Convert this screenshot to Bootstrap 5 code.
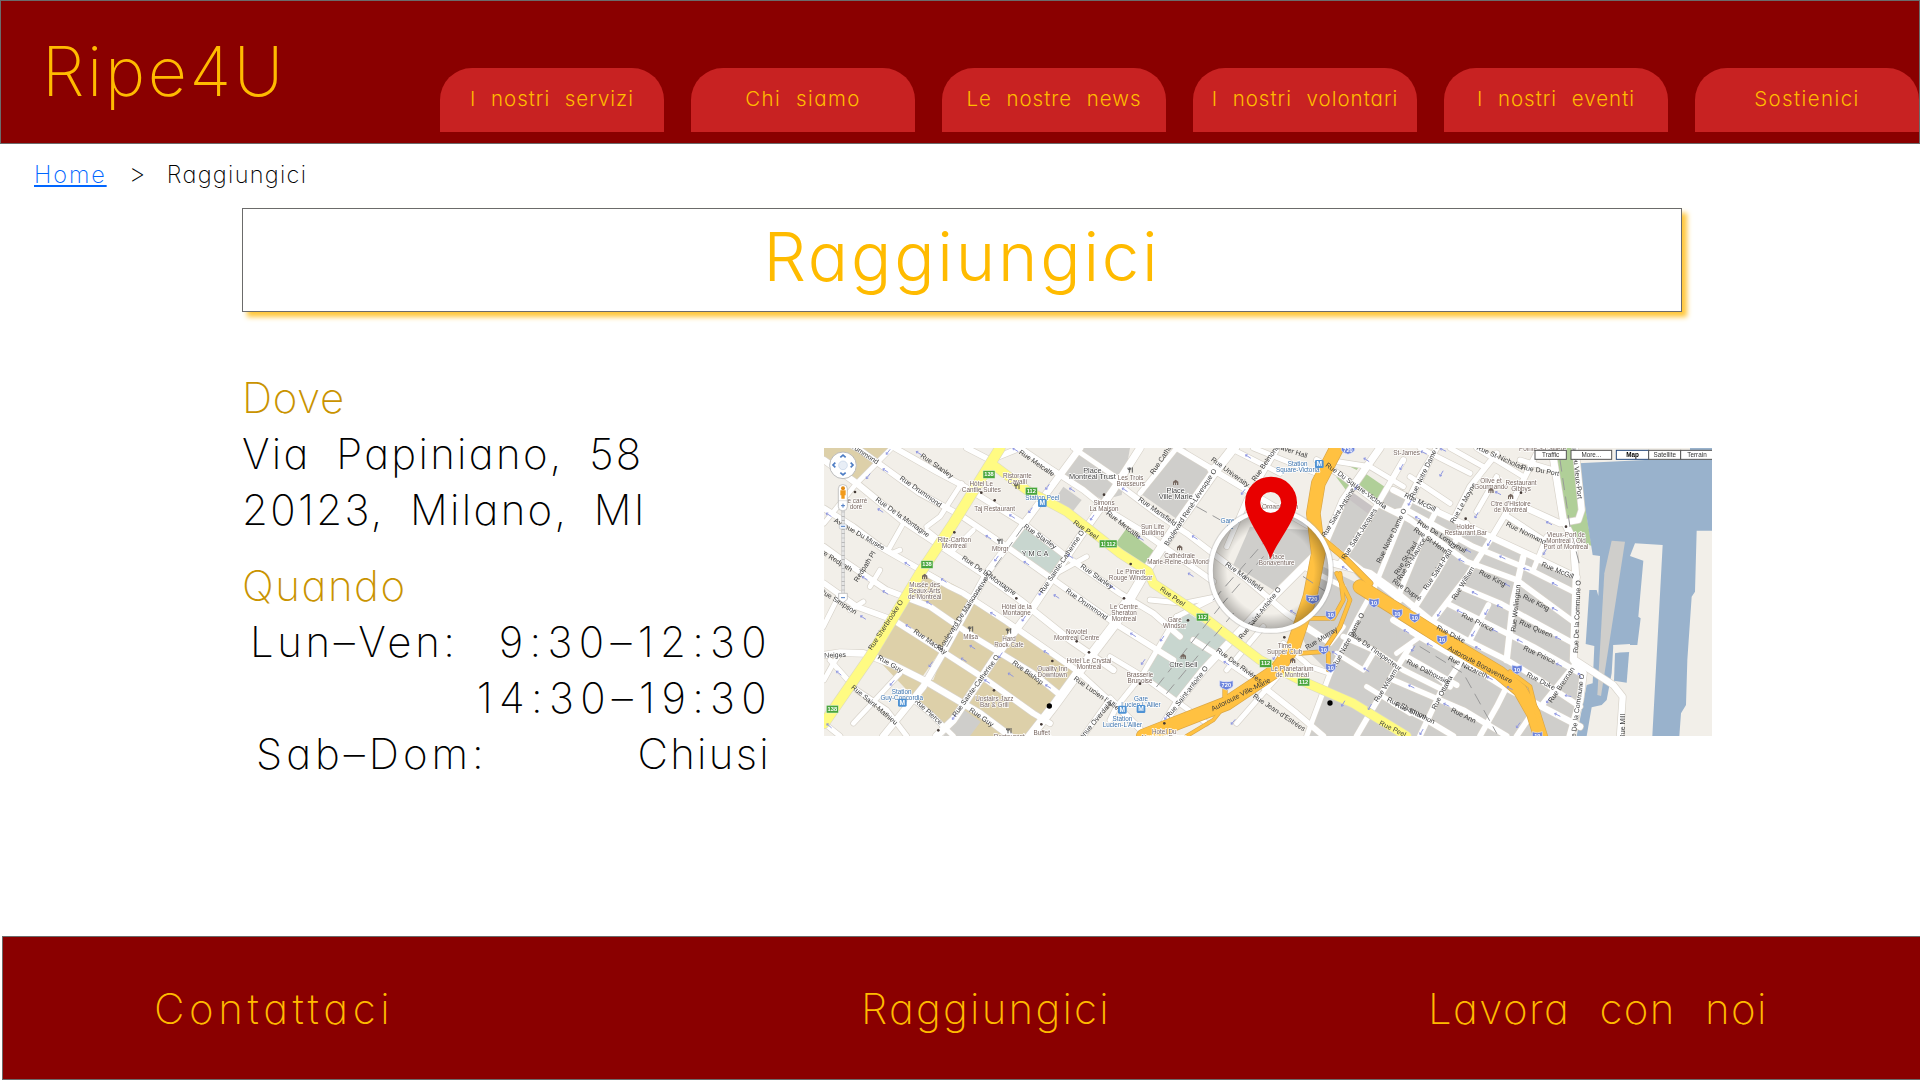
<!DOCTYPE html>
<html lang="it">
<head>
<meta charset="utf-8">
<meta name="viewport" content="width=device-width, initial-scale=1">
<title>Ripe4U - Raggiungici</title>
<link href="https://cdn.jsdelivr.net/npm/bootstrap@5.3.0/dist/css/bootstrap.min.css" rel="stylesheet">
<style>
body{font-family:Inter,Lato,"Liberation Sans",sans-serif;font-weight:200;font-feature-settings:"cv11";color:#000;background:#fff;height:1080px;overflow:hidden}
.site-head{height:144px;background:#8a0000;border:1px solid #6b6b6b;padding:0 0 11px 41px}
.brand-name{font-size:68px;line-height:80px;color:#ffbb00;text-decoration:none;margin-bottom:21px;white-space:nowrap;letter-spacing:2.6px}
.tabs-row{gap:27px}
.tab-link{width:224px;height:64px;padding-bottom:2px;background:#c82222;border-radius:32px 32px 0 0;color:#ffbb00;font-size:20.5px;font-weight:300;text-decoration:none;white-space:nowrap;letter-spacing:1px;word-spacing:.38em}
.tab-link:hover{color:#fff}
.tab-wide{letter-spacing:1.4px}
.crumbs{height:64px;padding:15px 0 0 34px;font-size:23.5px;line-height:32px;letter-spacing:1.3px}
.crumbs a{color:#06f;letter-spacing:1.9px;margin-right:22px}
.crumbs .crumb-sep{margin-right:20px;font-size:26px;line-height:30px}
.title-box{width:1440px;height:104px;padding-bottom:7px;margin-left:242px;border:1px solid #6b6b6b;box-shadow:5px 5px 5px #ffc83c;color:#fb0;font-size:67px;line-height:1;letter-spacing:2.8px}
.main-zone{height:624px;padding:58px 0 0 242px}
.info-txt{width:582px;font-size:42px;line-height:56px;letter-spacing:2.3px;white-space:nowrap}
.info-txt h2{font:inherit;color:#c99300;margin:0}
.info-txt .when-title{margin-top:20px;letter-spacing:1.6px}
.info-txt .where-title{letter-spacing:.6px}
.addr-line{word-spacing:.27em}
.hours-grid{width:529px;padding-left:8px}
.day-a{letter-spacing:3.6px}
.day-b{letter-spacing:4px;padding-left:6px}
.hour-val{letter-spacing:6.3px;margin-right:-2px}
.map-frame{width:888px;height:288px;margin-top:78px;filter:blur(.35px)}
.map-frame svg{display:block}
.site-foot{height:144px;margin-left:2px;padding:0 147px 0 151px;background:#8a0000;border:1px solid #6b6b6b;border-right:0}
.foot-link{color:#fb0;font-size:42px;text-decoration:none;white-space:nowrap;width:710px;letter-spacing:2.2px;word-spacing:.38em}
.foot-a{letter-spacing:4.6px;width:707px}
.foot-b{width:567px}
.foot-c{width:345px;letter-spacing:1.4px}
</style>
</head>
<body>
<header class="site-head d-flex align-items-end justify-content-between">
<a class="brand-name" href="#">Ripe4U</a>
<nav class="tabs-row d-flex">
<a class="tab-link d-flex align-items-center justify-content-center" href="#">I nostri servizi</a>
<a class="tab-link tab-wide d-flex align-items-center justify-content-center" href="#">Chi siamo</a>
<a class="tab-link d-flex align-items-center justify-content-center" href="#">Le nostre news</a>
<a class="tab-link d-flex align-items-center justify-content-center" href="#">I nostri volontari</a>
<a class="tab-link d-flex align-items-center justify-content-center" href="#">I nostri eventi</a>
<a class="tab-link tab-wide d-flex align-items-center justify-content-center" href="#">Sostienici</a>
</nav>
</header>
<nav class="crumbs d-flex"><a href="#">Home</a><span class="crumb-sep">&gt;</span><span>Raggiungici</span></nav>
<h1 class="title-box d-flex align-items-center justify-content-center fw-light mb-0">Raggiungici</h1>
<main class="main-zone d-flex">
<section class="info-txt">
<h2 class="where-title">Dove</h2>
<div class="addr-line">Via Papiniano, 58</div>
<div class="addr-line">20123, Milano, MI</div>
<h2 class="when-title">Quando</h2>
<div class="hours-grid">
<div class="d-flex justify-content-between"><span class="day-a">Lun–Ven:</span><span class="hour-val">9:30–12:30</span></div>
<div class="d-flex justify-content-end"><span class="hour-val">14:30–19:30</span></div>
<div class="d-flex justify-content-between"><span class="day-b">Sab–Dom:</span><span>Chiusi</span></div>
</div>
</section>
<div class="map-frame">
<svg id="cityMap" width="888" height="288" viewBox="12 24 2664 864" font-family="'Liberation Sans',sans-serif"></svg>
</div>
</main>
<footer class="site-foot d-flex align-items-center">
<a class="foot-link foot-a" href="#">Contattaci</a>
<a class="foot-link foot-b" href="#">Raggiungici</a>
<a class="foot-link foot-c" href="#">Lavora con noi</a>
</footer>
<script>
// City map: three adjoining sheets, west, centre and east, at x offsets 0, 870 and 1740.
const OX = [0, 870, 1740];
const shift = (i, s) => s.trim().split(/\s+/).map(p => { const [x, y] = p.split(','); return (+x + OX[i]) + ',' + y; }).join(' ');
const areas = [
 ['#ddd0a9',0,'12,24 215,24 110,130 12,60'],
 ['#ddd0a9',0,'310,385 430,450 765,685 765,710 680,840 660,888 430,888 360,860 280,770 155,640'],
 ['#f2efe9',0,'385,600 340,720 300,720'],
 ['#cfcecb',0,'430,808 482,845 450,888 370,888'],
 ['#c8d6cf',0,'610,262 735,345 700,405 570,325'],
 ['#cfcecb',0,'765,50 790,24 930,24 905,165 850,180 718,115'],
 ['#cfcecb',0,'730,140 785,180 750,225 700,185'],
 ['#cfcecb',1,'225,24 250,50 300,90 205,240 90,160 170,50'],
 ['#b0cf98',1,'48,268 135,335 100,385 10,320'],
 ['#c8d6cf',1,'220,510 355,600 195,780 100,710'],
 ['#cfcecb',1,'420,260 600,270 630,320 490,450 370,375'],
 ['#c8c3c4',1,'725,155 795,205 755,245 700,200'],
 ['#b0cf98',1,'678,110 725,130 715,160'],
 ['#b0cf98',1,'690,65 755,70 740,90'],
 ['#b0cf98',1,'765,100 826,142 805,185 745,132'],
 ['#cfcecb',1,'830,135 880,150 880,560 640,300 720,180 780,225'],
 ['#cfcecb',1,'640,380 560,560 600,640 660,700 590,888 890,888 890,500'],
 ['#cfcecb',2,'0,160 120,215 260,285 530,412 520,660 555,720 508,888 -10,888 -10,160'],
 ['#b0cf98',2,'465,24 530,24 535,70 575,318 530,300 500,240'],
 ['#99b2cc',2,'535,70 735,60 870,55 870,24 940,24 940,272 890,272 885,455 875,470 862,660 858,795 843,820 838,888 757,888 788,315 705,310 690,348 730,362 715,530 722,535 712,615 640,615 635,700 620,780 605,795 575,802 560,888 530,888 560,735 578,730 583,618 557,612 568,450 590,450 595,468 600,348 578,345'],
 ['#cfcecb',2,'635,302 675,305 603,768 592,765 613,400'],
 ['#99b2cc',2,'645,640 688,628 680,728 642,722'],
 ['#f2efe9',2,'640,615 690,612 690,636 645,638']
];
// [sheet, width, points]
const streets = [
 [0,17,'225,24 350,95 425,135 610,250 740,350 900,460 1000,520 1080,590'],
 [0,17,'12,-30 120,30 300,160 420,225 560,320 800,490 900,560 1060,660'],
 [0,19,'12,60 110,130 245,240 510,415 600,480 750,600 880,690'],
 [0,17,'12,205 100,260 180,320 390,440 430,460 560,545 775,695'],
 [0,17,'12,320 60,355 200,450 330,500 460,590 640,700 720,765'],
 [0,17,'12,430 110,500 220,540 330,610 500,720 640,820 690,850'],
 [0,20,'12,645 60,638 130,640 210,670 310,720 480,820 570,888'],
 [0,15,'30,660 110,750 200,810 260,888'], [0,15,'12,850 60,888'],
 [0,15,'270,770 330,820 400,888'], [0,14,'12,720 40,670 60,640'],
 [0,14,'215,24 110,130 12,250'], [0,14,'320,260 360,230 425,130'],
 [0,14,'205,330 250,250'], [0,14,'215,340 240,330'], [0,14,'150,440 180,390'],[0,14,'10,560 60,460'],[0,14,'90,510 130,485'],
 [0,14,'400,330 460,270'],[0,14,'370,310 320,270'],[0,14,'100,850 240,700'],
 [0,20,'190,888 310,740 380,620 500,400 620,240 780,24'],
 [0,22,'350,888 400,840 520,660 640,500 780,290 880,150 960,24'],
 [0,14,'700,405 800,350'],[0,14,'560,320 620,235'],
 [0,28,'610,915 700,800 780,690 890,545 980,390 1060,270 1180,100 1240,24'],
 [0,17,'440,24 510,60 600,24 690,85 790,150 870,215 960,270 1180,425'],
 [0,15,'760,24 900,120'],[0,15,'780,700 900,810 980,888'],[0,15,'790,888 860,790'],
 [1,17,'0,115 140,220 230,280 400,410 530,520 650,600'],
 [1,17,'200,24 260,60 360,120 460,180 600,260'],
 [1,15,'90,160 200,24'],[1,15,'360,24 510,100'],[1,15,'430,24 620,100'],
 [1,15,'350,320 410,180 500,30'],[1,15,'300,90 380,24'],
 [1,22,'140,888 200,790 280,690 430,530 500,460 640,320 700,180 810,24'],
 [1,15,'0,540 110,400'],[1,15,'120,480 220,490 320,470 200,530'],
 [1,15,'0,650 100,710 195,780 290,850'],[1,17,'250,600 330,650 440,725 560,820 640,888'],
 [1,15,'200,530 100,700 20,800 0,840'],[1,15,'350,690 460,560'],[1,15,'380,850 520,690'],
 [1,17,'0,775 110,888'],[1,15,'590,888 660,700 740,540 790,450 875,240 960,60'],
 [1,17,'620,60 700,110 810,195 900,240'],[1,17,'690,370 730,310 790,215 880,60'],
 [1,17,'640,300 870,480'],[1,20,'670,370 780,400 850,450 960,540'],
 [1,15,'580,560 660,610 700,560'],[1,17,'700,590 790,630 880,690 1000,750'],
 [1,15,'680,640 760,690 790,640'],[1,17,'740,888 850,700 900,620'],[1,15,'770,740 900,820'],
 [1,15,'650,60 780,80 880,140'],[1,15,'580,380 700,440'],[1,15,'660,700 600,680 520,610'],
 [2,19,'-20,150 110,215 270,290 400,350 530,412'],
 [2,17,'-10,215 20,210 220,320 380,385 530,460'],
 [2,17,'10,225 200,365 350,420 520,545'],
 [2,17,'180,440 300,490 520,610'],[2,17,'140,490 260,550 400,620 540,700'],
 [2,17,'90,540 200,600 320,660 420,720 540,800'],
 [2,19,'-20,540 60,590 200,670 320,745 540,860'],
 [2,17,'20,650 170,735'],[2,17,'-20,720 190,810 320,888'],[2,17,'-20,790 80,840 160,888'],
 [2,17,'40,510 110,400 150,330 200,250'],[2,17,'100,540 200,410 270,300 330,200 410,40'],
 [2,17,'-10,480 60,310 110,210'],[2,17,'10,210 60,110 110,24'],[2,17,'160,240 210,140 290,40'],
 [2,15,'60,24 210,100'],[2,15,'30,110 150,190'],[2,15,'150,24 250,80'],[2,15,'230,24 370,110'],
 [2,15,'230,215 290,110'],[2,17,'315,225 430,300'],[2,15,'400,390 440,290'],
 [2,19,'320,660 340,480 370,350'],[2,17,'210,600 265,495'],
 [2,17,'60,888 120,760 180,670'],[2,17,'240,888 290,800 320,740'],[2,17,'430,790 520,680'],
 [2,15,'360,60 460,90'],[2,19,'370,200 480,250 535,240 545,210 530,60 525,24'],
 [2,17,'150,740 100,700'],[2,17,'350,888 390,830'],[2,15,'-10,640 60,590'],
 [2,21,'455,24 490,240 520,300 528,420 520,660 550,700 540,780 510,888'],
 [2,19,'525,660 640,735 668,770 660,888']
];
const yellow = [[0,30,'12,850 150,650 300,400 400,250 540,24'],[0,26,'520,75 620,150 740,215 900,340 985,395 1000,430 1150,530 1320,660 1440,720 1600,790 1760,888']];
const orange = [
 [1,40,'100,888 350,790 500,690 550,620 600,470 625,340 610,220 625,130 680,24'],
 [1,16,'640,300 700,350 780,430'],
 [1,40,'750,440 870,515 1020,610 1170,700 1230,750 1270,820 1295,900'],
 [1,10,'600,535 670,535 700,480 690,400'],[1,10,'570,640 640,635 690,560 720,480 680,400'],
 [1,12,'345,740 345,770'],[1,10,'655,690 655,640'],[1,9,'230,888 310,840 350,790'],
 [2,10,'330,695 390,740 420,860']
];
const lines = (list, col, extra) => list.map(r => `<polyline points="${shift(r[0], r[2])}" stroke="${col}" stroke-width="${r[1] + extra}"/>`).join('');
// [sheet, text, x, y, angle, kind]: s street, p place, m metro, h heading
const labels = [
 [0,'Rue Stanley',350,78,35,'s'],[0,'Rue Drummond',302,155,35,'s'],[0,'Rue De la Montagne',247,232,35,'s'],
 [0,'Avenue Du Musée',118,283,30,'s'],[0,'Rue Redpath',42,358,32,'s'],[0,'Redpath Pl',135,380,-58,'s'],[0,'Rue Simpson',55,485,32,'s'],
 [0,'Rue Sherbrooke O',198,555,-57,'s'],[0,'Boulevard De Maisonneuve O',436,510,-57,'s'],[0,'Rue Mackay',330,605,35,'s'],
 [0,'Rue Guy',210,672,30,'s'],[0,'Rue Guy',484,832,35,'s'],[0,'-Neiges',42,646,-2,'s'],[0,'Rue Saint-Mathieu',163,795,40,'s'],[0,'Rue Pierce',325,816,42,'s'],
 [0,'Rue Sainte-Catherine O',468,738,-54,'s'],[0,'Rue Sainte-Catherine O',726,366,-56,'s'],[0,'Rue De la Montagne',507,407,35,'s'],
 [0,'Rue Stanley',660,290,35,'s'],[0,'Rue Stanley',830,410,35,'s'],[0,'Rue Drummond',800,493,35,'s'],[0,'Rue Metcalfe',650,70,35,'s'],
 [0,'Rue Peel',797,270,35,'s'],[0,'Rue Bishop',623,698,36,'s'],[0,'Rue Lucien l’Allier',832,762,35,'s'],[0,'Avenue Overdale',820,850,-50,'s'],[0,'Drummond',130,40,33,'s'],
 [0,'Hôtel Le|Cantlie Suites',484,131,0,'p'],[0,'Ristorante|Cavalli',592,107,0,'p'],[0,'Taj Restaurant',524,206,0,'p'],[0,'Ritz-Carlton|Montreal',403,301,0,'p'],
 [0,'Mbrgr',541,328,0,'p'],[0,'Musée des|Beaux-Arts|de Montréal',314,434,0,'p'],[0,'Hôtel de la|Montagne',590,500,0,'p'],[0,'Milsa',452,590,0,'p'],[0,'Hard|Rock Cafe',567,597,0,'p'],
 [0,'Novotel|Montreal Centre',770,576,0,'p'],[0,'Hotel Le Crystal|Montreal',807,662,0,'p'],[0,'Quality Inn|Downtown',697,688,0,'p'],[0,'Upstairs Jazz|Bar & Grill',523,777,0,'p'],[0,'Buffet|Maharaja',665,878,0,'p'],
 [0,'Restaurant',568,890,0,'p'],[0,'lle carré|doré',108,182,0,'p'],[0,'Simons|La Maison',852,189,0,'p'],[0,'Place|Montréal Trust',817,94,0,'h'],[0,'Y M C A',645,341,0,'h'],
 [0,'Station|Guy-Concordia',245,756,0,'m'],[0,'Station Peel',667,175,0,'m'],
 [1,'Rue Mansfield',142,215,35,'s'],[1,'Rue Metcalfe',40,255,38,'s'],[1,'Rue Cathcart',160,50,-56,'s'],[1,'Boulevard René-Lévesque O',242,202,-57,'s'],
 [1,'Rue University',360,97,36,'s'],[1,'Rue Belmont',465,72,-55,'s'],[1,'Beaver Hall',540,32,18,'s'],[1,'Rue Mansfield',402,410,36,'s'],[1,'Rue Saint-Antoine O',450,520,-52,'s'],
 [1,'Rue Peel',187,470,35,'s'],[1,'Rue Des Rivières',387,677,36,'s'],[1,'Rue Saint-antoine O',232,756,-52,'s'],[1,'Autoroute Ville-Marie',393,764,-27,'s'],
 [1,'Rue Jean-d’Estrées',507,818,34,'s'],[1,'Rue Du Square-Victoria',738,138,36,'s'],[1,'Rue Saint-Antoine',685,218,-58,'s'],[1,'Rue Saint-Jacques',748,282,-57,'s'],
 [1,'Rue Notre Dame O',845,288,-64,'s'],[1,'Rue St-Paul',888,355,-58,'s'],[1,'Rue Dupré',890,450,35,'s'],[1,'Rue Murray',634,596,-32,'s'],[1,'Rue Notre Dame O',716,600,-62,'s'],
 [1,'Rue De l’Inspecteur',797,634,36,'s'],[1,'Rue William',828,737,-58,'s'],[1,'Rue Peel',848,867,26,'s'],[1,'Rue Shannon',890,805,25,'s'],
 [1,'Les Trois|Brasseurs',62,114,0,'p'],[1,'Sun Life|Building',128,261,0,'p'],[1,'Cathédrale|Marie-Reine-du-Monde',209,349,0,'p'],[1,'Le Piment|Rouge Windsor',62,397,0,'p'],
 [1,'Le Centre|Sheraton|Montreal',42,501,0,'p'],[1,'Gare|Windsor',194,541,0,'p'],[1,'Brasserie|Brunoise',90,704,0,'p'],[1,'Hotel Du|Nouveau Forum',163,875,0,'p'],[1,'Time|Supper Club',524,618,0,'p'],
 [1,'Le Planetarium|de Montréal',547,688,0,'p'],[1,'Organisation',510,200,0,'p'],[1,'Place|Bonaventure',500,352,0,'p'],[1,'Place|Ville Marie',197,152,0,'h'],[1,'Ctre Bell',220,676,0,'h'],
 [1,'Gare|Lucien-L’Allier',93,778,0,'m'],[1,'Station|Lucien-L’Allier',37,838,0,'m'],[1,'Station|Square-Victoria',563,71,0,'m'],[1,'Gare c|de',360,244,0,'m'],
 [2,'St-James',20,40,0,'p'],[2,'Rue St-Nicholas',300,53,24,'s'],[2,'Rue Du Port',420,92,10,'s'],[2,'Rue Notre Dame O',75,92,-64,'s'],[2,'Rue Le Moyne',190,190,-60,'s'],[2,'Rue McGill',60,187,26,'s'],
 [2,'Rue De Longueuil',125,290,32,'s'],[2,'Rue St-Henri',92,302,36,'s'],[2,'Rue St-Maurice',35,358,-58,'s'],[2,'Rue Saint-Paul O',120,380,-57,'s'],[2,'Rue William',190,430,-58,'s'],[2,'Rue King',277,415,27,'s'],[2,'Rue King',408,488,27,'s'],
 [2,'Rue Normand',378,280,26,'s'],[2,'Rue McGill',473,392,22,'s'],[2,'Rue Wellington',348,505,-84,'s'],[2,'Rue Queen',408,567,23,'s'],[2,'Rue Prince',232,547,26,'s'],[2,'Rue Prince',418,645,25,'s'],[2,'Rue Duke',152,583,27,'s'],
 [2,'Rue Duke',422,724,27,'s'],[2,'Autoroute Bonaventure',240,675,28,'s'],[2,'Rue Nazareth',203,682,26,'s'],[2,'Rue Dalhousie',82,695,27,'s'],[2,'Rue Ottawa',127,758,-62,'s'],[2,'Rue Ann',190,827,26,'s'],
 [2,'Rue Shannon',45,820,25,'s'],[2,'Rue Brennan',485,735,-56,'s'],[2,'Rue De la Commune O',532,530,-88,'s'],[2,'Rue De la Commune O',532,810,-82,'s'],[2,'Rue Mill',668,860,-90,'s'],[2,'Rue Du Vieux-Port',530,90,84,'s'],
 [2,'Olive et|Gourmando',273,122,0,'p'],[2,'Restaurant|Gibbys',363,128,0,'p'],[2,'Ctre d’Histoire|de Montréal',332,193,0,'p'],[2,'Holder|Restaurant Bar',197,261,0,'p'],[2,'Vieux-Port de|Montreal / Old|Port of Montreal',498,284,0,'p'],[2,'Pointe-à-Callière',428,28,0,'p']
];
const ink = {s:['#3a3a3a',21],p:['#77665f',19],m:['#3b72ad',19],h:['#444',22]};
const text = ([i,t,x,y,a,k]) => `<text transform="translate(${x + OX[i]} ${y}) rotate(${a})" font-size="${ink[k][1]}" fill="${ink[k][0]}" text-anchor="middle"${k=='s'?'':' stroke="#fff" stroke-width="4" paint-order="stroke"'}>` + t.split('|').map((l,n) => `<tspan x="0" y="${6 + n * 18}">${l}</tspan>`).join('') + '</text>';
const green = [[507,103,138],[634,153,112],[321,373,138],[37,807,138],[856,311,112],[1147,531,112],[1337,670,112],[1451,726,112],[873,311,112]];
const blue = [[1478,477,720],[1532,525,10],[1662,488,10],[1732,520,10],[1511,629,10],[1532,683,10],[1219,735,720],[1784,533,10],[1866,599,10],[2091,688,10],[1584,28,720],[2152,888,10]];
const metro = [[667,189],[247,788],[1498,72],[907,809],[963,807]];
const dots = [[105,156],[484,158],[524,181],[403,277],[589,475],[770,604],[807,637],[697,663],[522,751],[355,871],[664,853],[852,164],[932,372],[912,475],[1104,541],[960,731],[1033,850],[1393,592],[2103,158],[1937,236],[2238,260]];
const food = [[592,139],[541,304],[453,567],[567,573],[568,872],[932,90]];
const museum = [[314,410],[1067,128],[1079,324],[1418,662],[2013,152],[2072,170],[1090,650]];
const arrows = [[205,35,-52],[297,40,33],[145,108,-52],[197,92,33],[182,212,33],[27,225,33],[135,415,33],[263,373,33],[197,458,33],[372,422,33],[328,490,33],[130,533,33],[266,560,33],[506,292,33],[577,230,33],[620,370,33],[530,355,-55],[632,210,-55],[683,140,-55],[757,150,33],[817,232,-55],[752,350,33],[878,443,33],[710,470,33],[663,457,-55],[520,523,33],[612,535,-55],[458,622,33],[542,645,-55],[680,638,33],[432,660,33],[333,672,-55],[502,725,33],[573,705,33],[685,740,33],[403,830,-55],[57,700,40],[217,728,-50],[28,858,40],[587,30,33],[915,150,33],[963,296,33],[1125,293,33],[1113,405,33],[1270,155,-55],[1285,50,33],[1310,240,33],[1420,517,33],[1027,595,-55],[940,585,33],[970,665,-55],[1220,670,33],[1365,650,-55],[1240,845,-50],[1040,830,-55],[1545,640,33],[1575,385,33],[1610,140,-60],[1640,60,33],[1745,80,-60],[1570,790,-60],[1640,690,33],[1650,800,-60],[1760,575,33],[1795,235,27],[1770,187,-60],[1865,100,-60],[1870,30,25],[1812,38,25],[1970,225,-60],[2008,308,-60],[2048,353,27],[1945,333,27],[1925,362,27],[2062,435,27],[2120,388,15],[2175,335,-60],[2205,433,27],[2188,250,27],[1965,460,27],[2040,500,27],[1920,515,27],[2000,515,-60],[2205,508,27],[2215,595,27],[1858,520,-60],[2025,572,27],[1960,580,-60],[2100,603,27],[2218,675,27],[1975,625,27],[1830,615,27],[2010,715,27],[1780,625,-60],[1775,740,27],[1880,795,27],[2070,745,27],[2095,855,-55],[2213,825,27],[2185,780,-60],[2245,768,10],[2280,708,60],[1805,875,-60],[2035,160,27]];
const controls = [['Traffic',405,94,0],['More...',513,122,0],['Map',649,97,1],['Satellite',746,96,0],['Terrain',842,98,0]];
document.getElementById('cityMap').innerHTML = `
<defs><clipPath id="lens"><circle cx="1352" cy="392" r="178"/></clipPath>
<radialGradient id="lensShade"><stop offset=".72" stop-color="#000" stop-opacity="0"/><stop offset="1" stop-color="#000" stop-opacity=".3"/></radialGradient></defs>
<rect width="2700" height="900" fill="#f2efe9"/>
${areas.map(([c,i,p]) => `<polygon points="${shift(i,p)}" fill="${c}"/>`).join('')}
<g fill="none" stroke-linejoin="round" stroke-linecap="round">
${lines(streets,'#d8d3ca',4)}${lines(streets,'#fff',0)}
${lines(yellow,'#dedcc0',4)}${lines(yellow,'#fffb82',0)}
${lines(orange,'#d9a648',4)}${lines(orange,'#ffc141',0)}
<g stroke="#999" stroke-width="3" stroke-dasharray="34 22"><path d="M380 620L490 430L610 260M1010 740L1200 500M1040 760L1240 520M1180 480L1400 230M1200 500L1330 350M1130 200L1210 245M2220 60L2250 260L2280 380M1800 620L1930 700L2030 880M1450 410L1540 470"/></g></g>
<g fill="none" stroke="#8b93e0" stroke-width="2.5">${arrows.map(([x,y,a]) => `<path transform="translate(${x} ${y}) rotate(${a})" d="M-10 0H9M-5-4L-10 0L-5 4"/>`).join('')}</g>
${labels.map(text).join('')}
<g fill="#443a36">${dots.map(([x,y]) => `<circle cx="${x}" cy="${y}" r="4"/>`).join('')}</g>
<g stroke="#555" stroke-width="3" fill="none">${food.map(([x,y]) => `<path d="M${x-4} ${y-8}V${y+8}M${x+5} ${y-8}V${y+8}M${x-8} ${y-7}V${y-2}H${x}V${y-7}"/>`).join('')}</g>
<g fill="#75675f">${museum.map(([x,y]) => `<path d="M${x-8} ${y-3}L${x} ${y-9}L${x+8} ${y-3}V${y+7}H${x+4}V${y}H${x+1}V${y+7}H${x-2}V${y}H${x-5}V${y+7}H${x-8}Z"/>`).join('')}</g>
<g font-size="17" font-weight="bold" fill="#fff" text-anchor="middle">
${green.map(([x,y,t]) => `<rect x="${x-18}" y="${y-11}" width="36" height="23" fill="#48a53c" stroke="#e5f1df" stroke-width="1.5"/><text x="${x}" y="${y+6}">${t}</text>`).join('')}
${blue.map(([x,y,t]) => { const w = t > 99 ? 20 : 15; return `<path d="M${x-w} ${y-13}Q${x} ${y-6} ${x+w} ${y-13}V${y+2}Q${x+w-2} ${y+9} ${x} ${y+15}Q${x-w+2} ${y+9} ${x-w} ${y+2}Z" fill="#6b83dc" stroke="#dfe4fa" stroke-width="2"/><text x="${x}" y="${y+7}">${t}</text>`; }).join('')}
${metro.map(([x,y]) => `<rect x="${x-13}" y="${y-12}" width="26" height="24" rx="4" fill="#4e92d4"/><text x="${x}" y="${y+7}" font-size="20">M</text>`).join('')}</g>
<g clip-path="url(#lens)"><circle cx="1352" cy="392" r="180" fill="url(#lensShade)"/></g>
<circle cx="1352" cy="392" r="181" fill="none" stroke="#aaa" stroke-opacity=".35" stroke-width="18"/>
<circle cx="1352" cy="392" r="180" fill="none" stroke="#fff" stroke-width="13"/>
<path fill="#e80000" fill-rule="evenodd" d="M1352 358C1338 310 1275 240 1275 187A78 77 0 0 1 1431 187C1431 240 1366 310 1352 358ZM1352 156A31.500 31.500 0 1 0 1352 219A31.500 31.500 0 1 0 1352 156Z"/>
<circle cx="688" cy="798" r="8"/><circle cx="1530" cy="789" r="8"/>
<circle cx="69" cy="76" r="40" fill="#fff" stroke="#bbb" stroke-width="3"/><circle cx="69" cy="76" r="13" fill="#e8eef6" stroke="#c3d2e6" stroke-width="2"/>
<path fill="none" stroke="#4c7cc4" stroke-width="5" d="M61 52L69 45L77 52M61 98L69 105L77 98M46 68L39 75L46 82M92 68L99 75L92 82"/>
<rect x="65" y="205" width="9" height="260" fill="#e4e4e4" stroke="#aaa"/><path stroke="#aaa" stroke-dasharray="2 11" stroke-width="9" d="M69.500 215V460"/>
<rect x="55" y="134" width="27" height="78" rx="12" fill="#fff" stroke="#aaa" stroke-width="2"/><path stroke="#aaa" d="M55 182H82"/>
<circle cx="69" cy="145" r="6" fill="#e18a13"/><path fill="#f19a1c" d="M61 151H77V166H74V176H64V166H61Z"/>
<rect x="58" y="252" width="22" height="15" rx="4" fill="#eef3fa" stroke="#999"/><path fill="#fff" stroke="#aaa" stroke-width="2" d="M56 460H82V478L69 488L56 478Z"/>
<path stroke="#4c7cc4" stroke-width="3" d="M63 197H75M69 191V203M63 259H75M63 473H75"/>
<g text-anchor="middle" font-size="19" fill="#333">${controls.map(([t,x,w,b]) => `<rect x="${x+1740}" y="31" width="${w}" height="27" fill="#fff" stroke="${b?'#24477a':'#555'}" stroke-width="3"/><text x="${x+1740+w/2}" y="51"${b?' font-weight="bold" fill="#000"':''}>${t}</text>`).join('')}</g>`;
</script>
<script src="https://cdn.jsdelivr.net/npm/bootstrap@5.3.0/dist/js/bootstrap.bundle.min.js"></script>
</body>
</html>
